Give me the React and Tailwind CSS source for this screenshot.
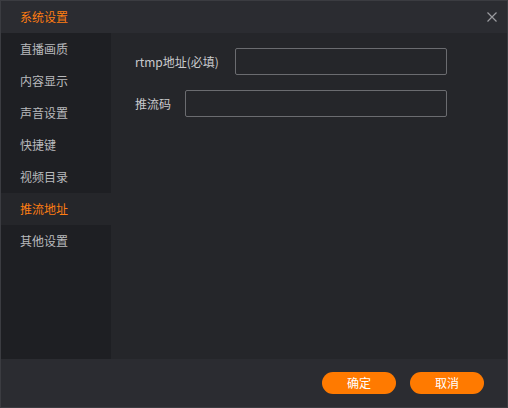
import React from "react";

const items = ["直播画质", "内容显示", "声音设置", "快捷键", "视频目录", "推流地址", "其他设置"];

export default function App() {
  return (
    <div
      className="w-[508px] h-[408px] border border-[#3b3c41] bg-[#25262a] flex flex-col text-[12px]"
      style={{ fontFamily: '"Noto Sans CJK SC", "Noto Sans", sans-serif' }}
    >
      <div className="h-[32px] shrink-0 bg-[#2b2c31] flex items-center justify-between pl-[19px] pr-[9px]">
        <span className="text-[#ff7d12]">系统设置</span>
        <svg width="12" height="12" viewBox="0 0 12 12" className="text-[#9a9b9f]">
          <path d="M1.5 1.5 L10.5 10.5 M10.5 1.5 L1.5 10.5" stroke="currentColor" strokeWidth="1.2" />
        </svg>
      </div>
      <div className="flex h-[326px] shrink-0">
        <div className="w-[110px] shrink-0 bg-[#1e1f23] flex flex-col">
          {items.map((t) => (
            <div
              key={t}
              className={
                t === "推流地址"
                  ? "h-[32px] flex items-center pl-[19px] bg-[#25262a] text-[#ff7d12]"
                  : "h-[32px] flex items-center pl-[19px] text-[#b9babd]"
              }
            >
              {t}
            </div>
          ))}
        </div>
        <div className="flex-1 bg-[#25262a] pl-[24px] pt-[15px] flex flex-col gap-[15px]">
          <div className="flex items-center">
            <span className="w-[100px] text-[#c9cacd]">rtmp地址(必填)</span>
            <div className="w-[212px] h-[27px] border border-[#6b6c70] rounded-[2px] bg-[#25262a]" />
          </div>
          <div className="flex items-center">
            <span className="w-[50px] text-[#c9cacd]">推流码</span>
            <div className="w-[262px] h-[27px] border border-[#6b6c70] rounded-[2px] bg-[#25262a]" />
          </div>
        </div>
      </div>
      <div className="flex-1 bg-[#2b2c31] flex items-center justify-end gap-[14px] pr-[23px]">
        <button className="w-[74px] h-[22px] rounded-full bg-[#ff7a00] text-white text-[12px] flex items-center justify-center">确定</button>
        <button className="w-[74px] h-[22px] rounded-full bg-[#ff7a00] text-white text-[12px] flex items-center justify-center">取消</button>
      </div>
    </div>
  );
}
